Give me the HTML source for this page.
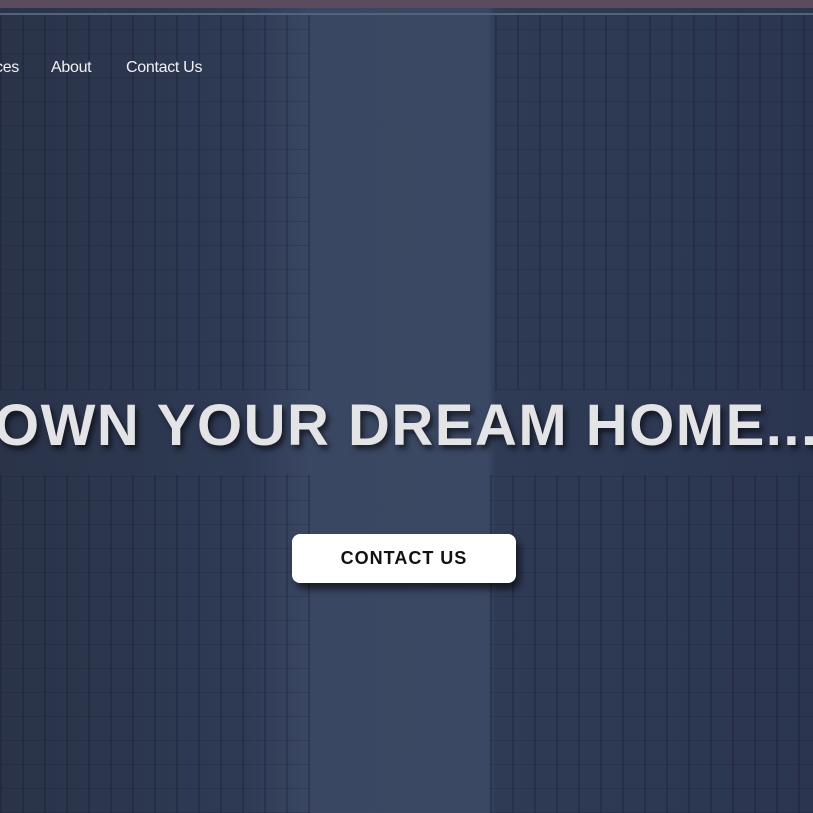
<!DOCTYPE html>
<html><head><style>
html,body{margin:0;padding:0;width:813px;height:813px;overflow:hidden;background:#323d57;font-family:"Liberation Sans",sans-serif}
.bg{position:absolute;inset:0;background:linear-gradient(90deg,#2a3349 0%,#2e3a54 30%,#3a4762 38%,#3b4863 60%,#2f3b55 61%,#2b3550 100%)}
.grid{position:absolute;background:
repeating-linear-gradient(90deg,rgba(20,26,40,.3) 0 2px,transparent 2px 22px),
repeating-linear-gradient(0deg,rgba(20,26,40,.22) 0 1px,transparent 1px 24px)}
.top{position:absolute;left:0;top:0;width:813px;height:8px;background:#5b4b5c}
.line{position:absolute;left:0;top:13px;width:813px;height:2px;background:#56627a}
.nav{position:absolute;top:59px;color:#f2f2f2;font-size:16px;letter-spacing:-0.3px}
h1{position:absolute;left:-6px;top:392px;margin:0;font-size:58px;font-weight:bold;color:#e4e4e6;letter-spacing:1.5px;white-space:nowrap;text-shadow:3px 4px 6px rgba(0,0,0,.6)}
.btn{position:absolute;left:292px;top:534px;width:224px;height:49px;background:#fff;border-radius:8px;box-shadow:4px 6px 8px rgba(0,0,0,.6);text-align:center;line-height:49px;font-weight:bold;font-size:18px;letter-spacing:1px;color:#111}
</style></head><body>
<div class="bg"></div>
<div class="grid" style="left:0;top:15px;width:310px;height:375px"></div>
<div class="grid" style="left:495px;top:15px;width:318px;height:375px"></div>
<div class="grid" style="left:0;top:475px;width:310px;height:338px"></div>
<div class="grid" style="left:490px;top:475px;width:323px;height:338px"></div>
<div class="top"></div><div class="line"></div>
<div class="nav" style="left:-5px">ces</div>
<div class="nav" style="left:51px">About</div>
<div class="nav" style="left:126px">Contact Us</div>
<h1>OWN YOUR DREAM HOME...</h1>
<div class="btn">CONTACT US</div>
</body></html>
